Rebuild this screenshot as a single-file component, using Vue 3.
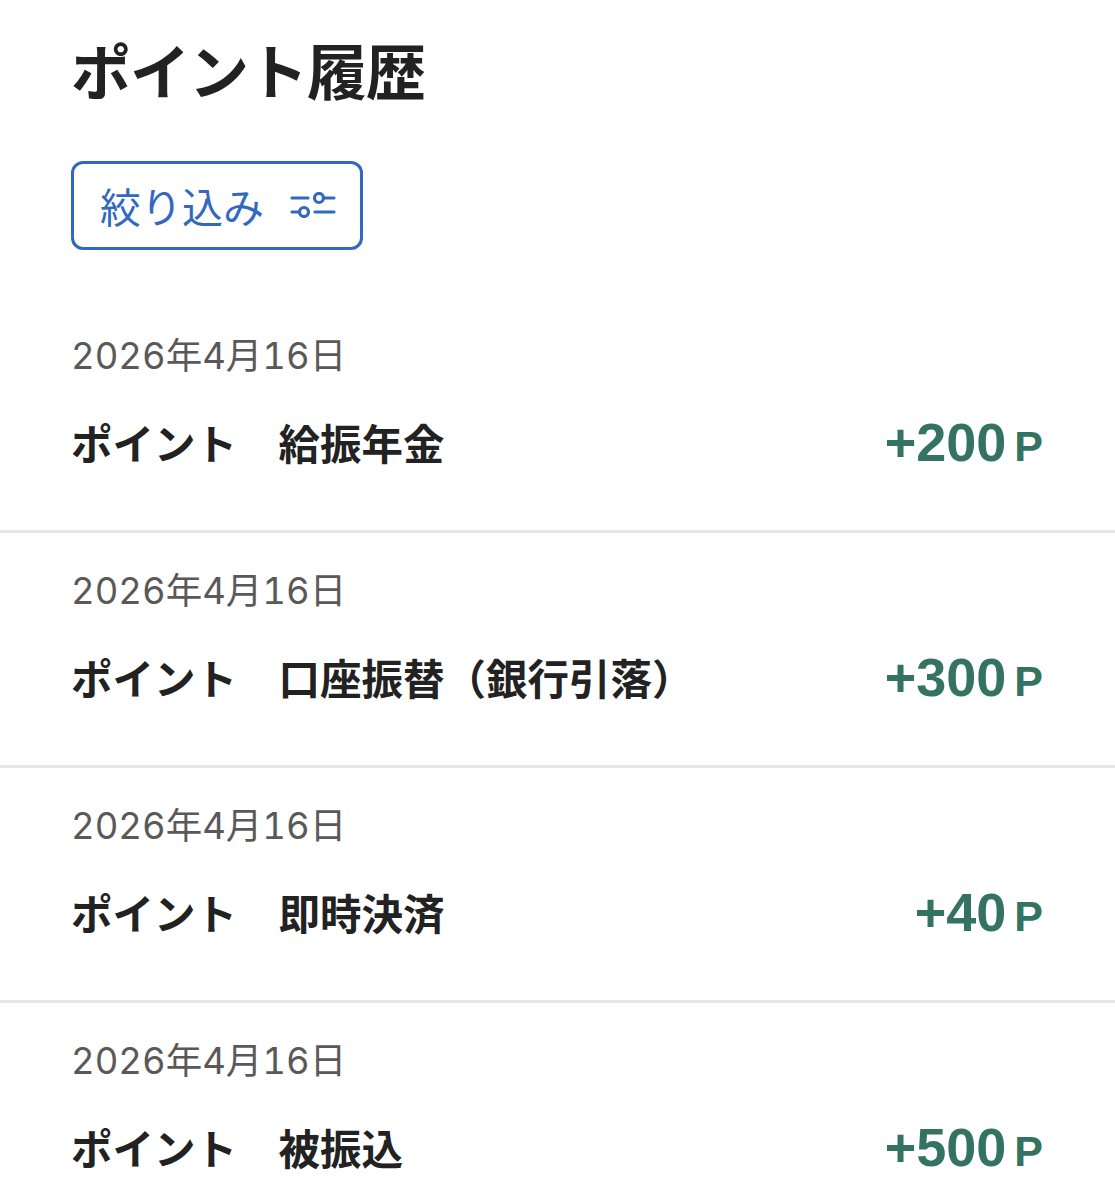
<template>
  <div class="page">
    <h1 class="title">ポイント履歴</h1>
    <button class="filter-btn">
      <span>絞り込み</span>
      <svg class="filter-icon" width="46" height="26" viewBox="0 0 46 26" fill="none" stroke="#3268c0" stroke-width="3.2" stroke-linecap="round">
        <path d="M2 6H18" />
        <circle cx="29" cy="6" r="4.500" />
        <path d="M33.500 6H44" />
        <path d="M2 20H9.500" />
        <circle cx="14" cy="20" r="4.500" />
        <path d="M25 20H44" />
      </svg>
    </button>
    <ul class="history">
      <li v-for="(row, i) in rows" :key="i" class="row">
        <div class="date">2026年4月16日</div>
        <div class="line">
          <span class="label">ポイント　{{ row.label }}</span>
          <span class="amount">+{{ row.points }}<small class="unit">P</small></span>
        </div>
      </li>
    </ul>
  </div>
</template>

<script setup>
const rows = [
  { label: '給振年金', points: 200 },
  { label: '口座振替（銀行引落）', points: 300 },
  { label: '即時決済', points: 40 },
  { label: '被振込', points: 500 },
]
</script>

<style scoped>
.page {
  height: 1200px;
  overflow: hidden;
  background: #fff;
  font-family: "Noto Sans CJK JP", "Liberation Sans", sans-serif;
  color: #222;
}

.title {
  margin: 0;
  padding: 27px 71px 3px;
  font-size: 60px;
  line-height: 84px;
  font-weight: 700;
  letter-spacing: -1px;
}

.filter-btn {
  display: flex;
  align-items: center;
  justify-content: space-between;
  box-sizing: border-box;
  width: 292px;
  height: 89px;
  margin: 47px 0 0 71px;
  padding: 0 24px 2px 26px;
  background: #fff;
  border: 3px solid #3268c0;
  border-radius: 12px;
  color: #3268c0;
  font-family: inherit;
  font-size: 41px;
  line-height: 78px;
}

.filter-icon {
  flex: none;
}

.history {
  list-style: none;
  margin: 48px 0 0;
  padding: 0;
}

.row {
  box-sizing: border-box;
  height: 235px;
  padding: 35px 72px 0 71px;
  border-bottom: 3px solid #e6e6e6;
}

.row:last-child {
  border-bottom: 0;
}

.date {
  font-family: Inter, "Noto Sans CJK JP", sans-serif;
  font-size: 36.500px;
  line-height: 47px;
  font-variant-numeric: tabular-nums;
  color: #595959;
}

.line {
  display: flex;
  justify-content: space-between;
  align-items: center;
  margin-top: 26px;
  height: 72px;
}

.label {
  font-size: 41.500px;
  font-weight: 700;
  color: #222;
}

.amount {
  font-family: "Liberation Sans", sans-serif;
  font-size: 54px;
  font-weight: 700;
  color: #33735f;
}

.unit {
  margin-left: 8px;
  font-size: 43px;
}
</style>
